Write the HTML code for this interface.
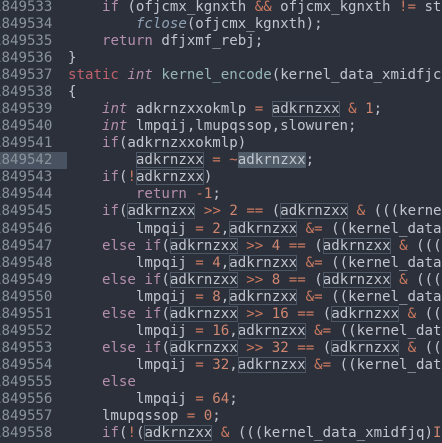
<!DOCTYPE html>
<html><head><meta charset="utf-8"><style>
html,body{margin:0;padding:0;background:#2b303b;width:442px;height:442px;overflow:hidden}
.wrap{position:absolute;left:0;top:-1.5px;font-family:"DejaVu Sans Mono","Liberation Mono",monospace;font-size:14.1px;line-height:17.08px;white-space:pre;color:#c0c5ce}
.g{position:absolute;top:0;left:-7px;width:74px;color:#8a929c}
.c{position:absolute;top:0;left:68px;width:400px}
.hl{position:absolute;left:0;width:67px;height:17px;background:#485261}
.k{color:#b48ead}.i{color:#b48ead;font-style:italic}.r{color:#bf616a}.f{color:#96b5b4}.b{color:#8fa1b3;font-style:italic}
.n{color:#d08770}.o{color:#cc7a60}
.x{outline:1px solid #4d5766;outline-offset:-1px}
.s{background:#4f5b66}
</style></head><body>
<div class="hl" style="top:152.2px"></div>
<div class="wrap"><div class="g">1849533
1849534
1849535
1849536
1849537
1849538
1849539
1849540
1849541
1849542
1849543
1849544
1849545
1849546
1849547
1849548
1849549
1849550
1849551
1849552
1849553
1849554
1849555
1849556
1849557
1849558</div><div class="c">    <span class="k">if</span> (ofjcmx_kgnxth <span class="o">&amp;&amp;</span> ofjcmx_kgnxth <span class="o">!=</span> st
        <span class="b">fclose</span>(ofjcmx_kgnxth);
    <span class="k">return</span> dfjxmf_rebj;
}
<span class="r">static</span> <span class="i">int</span> <span class="f">kernel_encode</span>(kernel_data_xmidfjc
{
    <span class="i">int</span> adkrnzxxokmlp <span class="o">=</span> <span class="x">adkrnzxx</span> <span class="o">&amp;</span> <span class="n">1</span>;
    <span class="i">int</span> lmpqij,lmupqssop,slowuren;
    <span class="k">if</span>(adkrnzxxokmlp)
        <span class="x">adkrnzxx</span> <span class="o">=</span> <span class="o">~</span><span class="s">adkrnzxx</span>;
    <span class="k">if</span>(<span class="o">!</span><span class="x">adkrnzxx</span>)
        <span class="k">return</span> <span class="o">-</span><span class="n">1</span>;
    <span class="k">if</span>(<span class="x">adkrnzxx</span> <span class="o">&gt;&gt;</span> <span class="n">2</span> <span class="o">==</span> (<span class="x">adkrnzxx</span> <span class="o">&amp;</span> (((kerne
        lmpqij <span class="o">=</span> <span class="n">2</span>,<span class="x">adkrnzxx</span> <span class="o">&amp;=</span> ((kernel_data
    <span class="k">else</span> <span class="k">if</span>(<span class="x">adkrnzxx</span> <span class="o">&gt;&gt;</span> <span class="n">4</span> <span class="o">==</span> (<span class="x">adkrnzxx</span> <span class="o">&amp;</span> (((
        lmpqij <span class="o">=</span> <span class="n">4</span>,<span class="x">adkrnzxx</span> <span class="o">&amp;=</span> ((kernel_data
    <span class="k">else</span> <span class="k">if</span>(<span class="x">adkrnzxx</span> <span class="o">&gt;&gt;</span> <span class="n">8</span> <span class="o">==</span> (<span class="x">adkrnzxx</span> <span class="o">&amp;</span> (((
        lmpqij <span class="o">=</span> <span class="n">8</span>,<span class="x">adkrnzxx</span> <span class="o">&amp;=</span> ((kernel_data
    <span class="k">else</span> <span class="k">if</span>(<span class="x">adkrnzxx</span> <span class="o">&gt;&gt;</span> <span class="n">16</span> <span class="o">==</span> (<span class="x">adkrnzxx</span> <span class="o">&amp;</span> ((
        lmpqij <span class="o">=</span> <span class="n">16</span>,<span class="x">adkrnzxx</span> <span class="o">&amp;=</span> ((kernel_dat
    <span class="k">else</span> <span class="k">if</span>(<span class="x">adkrnzxx</span> <span class="o">&gt;&gt;</span> <span class="n">32</span> <span class="o">==</span> (<span class="x">adkrnzxx</span> <span class="o">&amp;</span> ((
        lmpqij <span class="o">=</span> <span class="n">32</span>,<span class="x">adkrnzxx</span> <span class="o">&amp;=</span> ((kernel_dat
    <span class="k">else</span>
        lmpqij <span class="o">=</span> <span class="n">64</span>;
    lmupqssop <span class="o">=</span> <span class="n">0</span>;
    <span class="k">if</span>(<span class="o">!</span>(<span class="x">adkrnzxx</span> <span class="o">&amp;</span> (((kernel_data_xmidfjq)<span class="n">I</span></div></div>
</body></html>
